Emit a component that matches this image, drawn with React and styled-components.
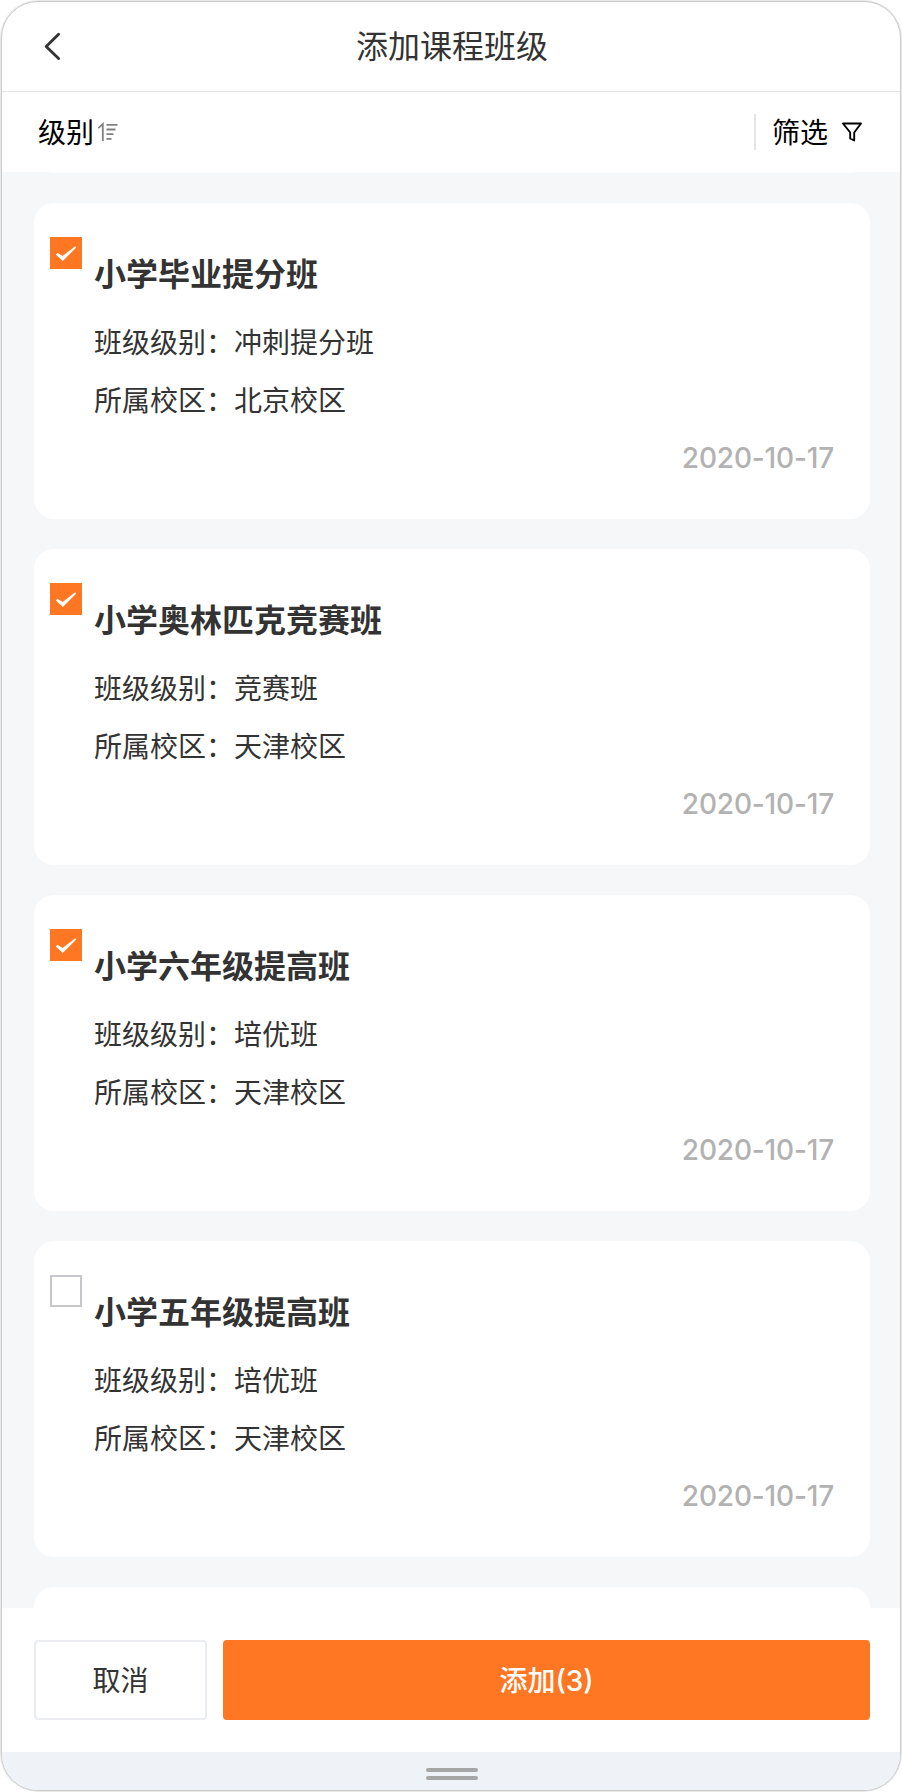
import React, { useState } from 'react'
import styled, { createGlobalStyle } from 'styled-components'

const GlobalStyle = createGlobalStyle`
  * {
    box-sizing: border-box;
  }

  body {
    margin: 0;
    background: #fff;
    font-family: Inter, 'Noto Sans CJK SC', sans-serif;
    color: #333;
  }

  button {
    font-family: inherit;
    color: inherit;
    cursor: pointer;
  }
`

const Phone = styled.div`
  display: flex;
  flex-direction: column;
  width: 900px;
  height: 1790px;
  margin: 1px;
  border: 1px solid #ccc;
  border-radius: 37px;
  box-shadow: 0 0 0 1px #e8e8e8;
  background: #fff;
  overflow: hidden;
`

const Header = styled.header`
  display: grid;
  grid-template-columns: 101px 1fr 99px;
  align-items: center;
  flex: none;
  height: 90px;
  border-bottom: 1px solid #e6e6e6;
`

const BackButton = styled.button`
  display: flex;
  align-items: flex-start;
  width: 100px;
  height: 88px;
  padding: 28px 0 0 41px;
  border: 0;
  background: none;
`

const PageTitle = styled.h1`
  margin: 0;
  font-size: 32px;
  font-weight: 400;
  line-height: 88px;
  text-align: center;
`

const Toolbar = styled.div`
  display: flex;
  align-items: center;
  justify-content: space-between;
  flex: none;
  height: 80px;
  padding: 0 37px 0 36px;
  color: #000;
`

const ToolButton = styled.button`
  display: flex;
  align-items: center;
  height: 36px;
  padding: 0;
  border: 0;
  background: none;
  font-size: 28px;
  line-height: 36px;

  & + & {
    padding-left: 16px;
    border-left: 2px solid #e6e6e6;
  }
`

const ToolLabel = styled.span`
  padding-top: 2px;
`

const List = styled.main`
  flex: 1;
  min-height: 0;
  padding: 0 30px 0 32px;
  background: #f5f7f9;
  overflow: hidden;
`

const Card = styled.section`
  display: flex;
  height: 316px;
  margin-bottom: 30px;
  padding: 34px 36px 0 16px;
  border-radius: 20px;
  background: #fff;
`

// the card scrolled away above, only its last row is visible
const ScrolledCard = styled(Card)`
  margin-top: -315px;
`

const Checkbox = styled.button`
  display: flex;
  flex: none;
  width: 32px;
  height: 32px;
  padding: 0;
  border: ${({ $checked }) => ($checked ? '0' : '2px solid #c8c7cc')};
  background: ${({ $checked }) => ($checked ? '#ff7723' : '#fff')};
`

const CardBody = styled.div`
  flex: 1;
  padding: 14px 0 0 12px;
`

const ClassName = styled.h2`
  margin: 0 0 15px;
  font-size: 32px;
  font-weight: 700;
  line-height: 48px;
`

const Field = styled.p`
  margin: 0;
  font-size: 28px;
  line-height: 58px;
`

const DateText = styled.time`
  display: block;
  color: #b2b2b2;
  font-size: 28px;
  font-weight: 500;
  line-height: 56px;
  letter-spacing: -0.17px;
  text-align: right;
`

const Footer = styled.footer`
  display: flex;
  flex: none;
  gap: 16px;
  height: 144px;
  padding: 32px 30px 32px 32px;
`

const Button = styled.button`
  flex: ${({ $primary }) => ($primary ? '1' : 'none')};
  width: 173px;
  height: 80px;
  padding: 0 0 2px;
  border: ${({ $primary }) => ($primary ? '0' : '2px solid #ebecf0')};
  border-radius: 4px;
  background: ${({ $primary }) => ($primary ? '#ff7723' : '#fff')};
  color: ${({ $primary }) => ($primary ? '#fff' : '#333')};
  font-size: 28px;
  font-weight: ${({ $primary }) => ($primary ? '500' : '400')};
`

const HomeBar = styled.div`
  display: flex;
  flex-direction: column;
  align-items: center;
  flex: none;
  gap: 4px;
  height: 38px;
  padding: 16px 0 0 2px;
  background: #eff3f8;
`

const Grip = styled.span`
  width: 52px;
  height: 4px;
  border-radius: 2px;
  background: #a6a6a6;
`

const SortSvg = styled.svg`
  margin-left: 4px;
`

const FilterSvg = styled.svg`
  margin-left: 13px;
`

const BackIcon = () => (
  <svg width="20" height="30" viewBox="0 0 20 30" fill="none" stroke="#333" strokeWidth="2.8" strokeLinecap="round" strokeLinejoin="round">
    <path d="M15.6 3.3 3.2 15.4 15.6 27.5" />
  </svg>
)

const SortIcon = () => (
  <SortSvg width="20" height="20" viewBox="0 0 20 20" fill="none" stroke="#808080" strokeWidth="1.8">
    <path d="M.2 6.2 4.8 2v17M8.5 2.8h11M8.5 7.5h9M8.5 12.2h7M8.5 16.8h5" />
  </SortSvg>
)

const FilterIcon = () => (
  <FilterSvg width="22" height="22" viewBox="0 0 22 22" fill="none" stroke="#000" strokeWidth="1.9" strokeLinejoin="round">
    <path d="M2 2.5h18l-6.8 9v8l-4-2v-6z" />
  </FilterSvg>
)

const CheckIcon = () => (
  <svg width="32" height="32" viewBox="0 0 32 32" fill="#fff">
    <path d="M5.8 17.4 7.4 15.8l5.2 3.2L25.2 9.2l1 1.2L12.8 24z" />
  </svg>
)

const classes = [
  { id: 1, name: '小学毕业提分班', level: '冲刺提分班', campus: '北京校区', date: '2020-10-17' },
  { id: 2, name: '小学奥林匹克竞赛班', level: '竞赛班', campus: '天津校区', date: '2020-10-17' },
  { id: 3, name: '小学六年级提高班', level: '培优班', campus: '天津校区', date: '2020-10-17' },
  { id: 4, name: '小学五年级提高班', level: '培优班', campus: '天津校区', date: '2020-10-17' },
]

const ClassCard = ({ item, checked, onToggle }) => (
  <Card>
    <Checkbox $checked={checked} role="checkbox" aria-checked={checked} onClick={onToggle}>
      {checked && <CheckIcon />}
    </Checkbox>
    <CardBody>
      <ClassName>{item.name}</ClassName>
      <Field>班级级别：{item.level}</Field>
      <Field>所属校区：{item.campus}</Field>
      <DateText>{item.date}</DateText>
    </CardBody>
  </Card>
)

const App = () => {
  const [selected, setSelected] = useState([1, 2, 3])

  const toggle = (id) => {
    setSelected(selected.includes(id) ? selected.filter((s) => s !== id) : [...selected, id])
  }

  return (
    <>
      <GlobalStyle />
      <Phone>
        <Header>
          <BackButton>
            <BackIcon />
          </BackButton>
          <PageTitle>添加课程班级</PageTitle>
        </Header>
        <Toolbar>
          <ToolButton>
            <ToolLabel>级别</ToolLabel>
            <SortIcon />
          </ToolButton>
          <ToolButton>
            <ToolLabel>筛选</ToolLabel>
            <FilterIcon />
          </ToolButton>
        </Toolbar>
        <List>
          <ScrolledCard />
          {classes.map((item) => (
            <ClassCard
              key={item.id}
              item={item}
              checked={selected.includes(item.id)}
              onToggle={() => toggle(item.id)}
            />
          ))}
          <Card />
        </List>
        <Footer>
          <Button onClick={() => setSelected([])}>取消</Button>
          <Button $primary>添加({selected.length})</Button>
        </Footer>
        <HomeBar>
          <Grip />
          <Grip />
        </HomeBar>
      </Phone>
    </>
  )
}

export default App
